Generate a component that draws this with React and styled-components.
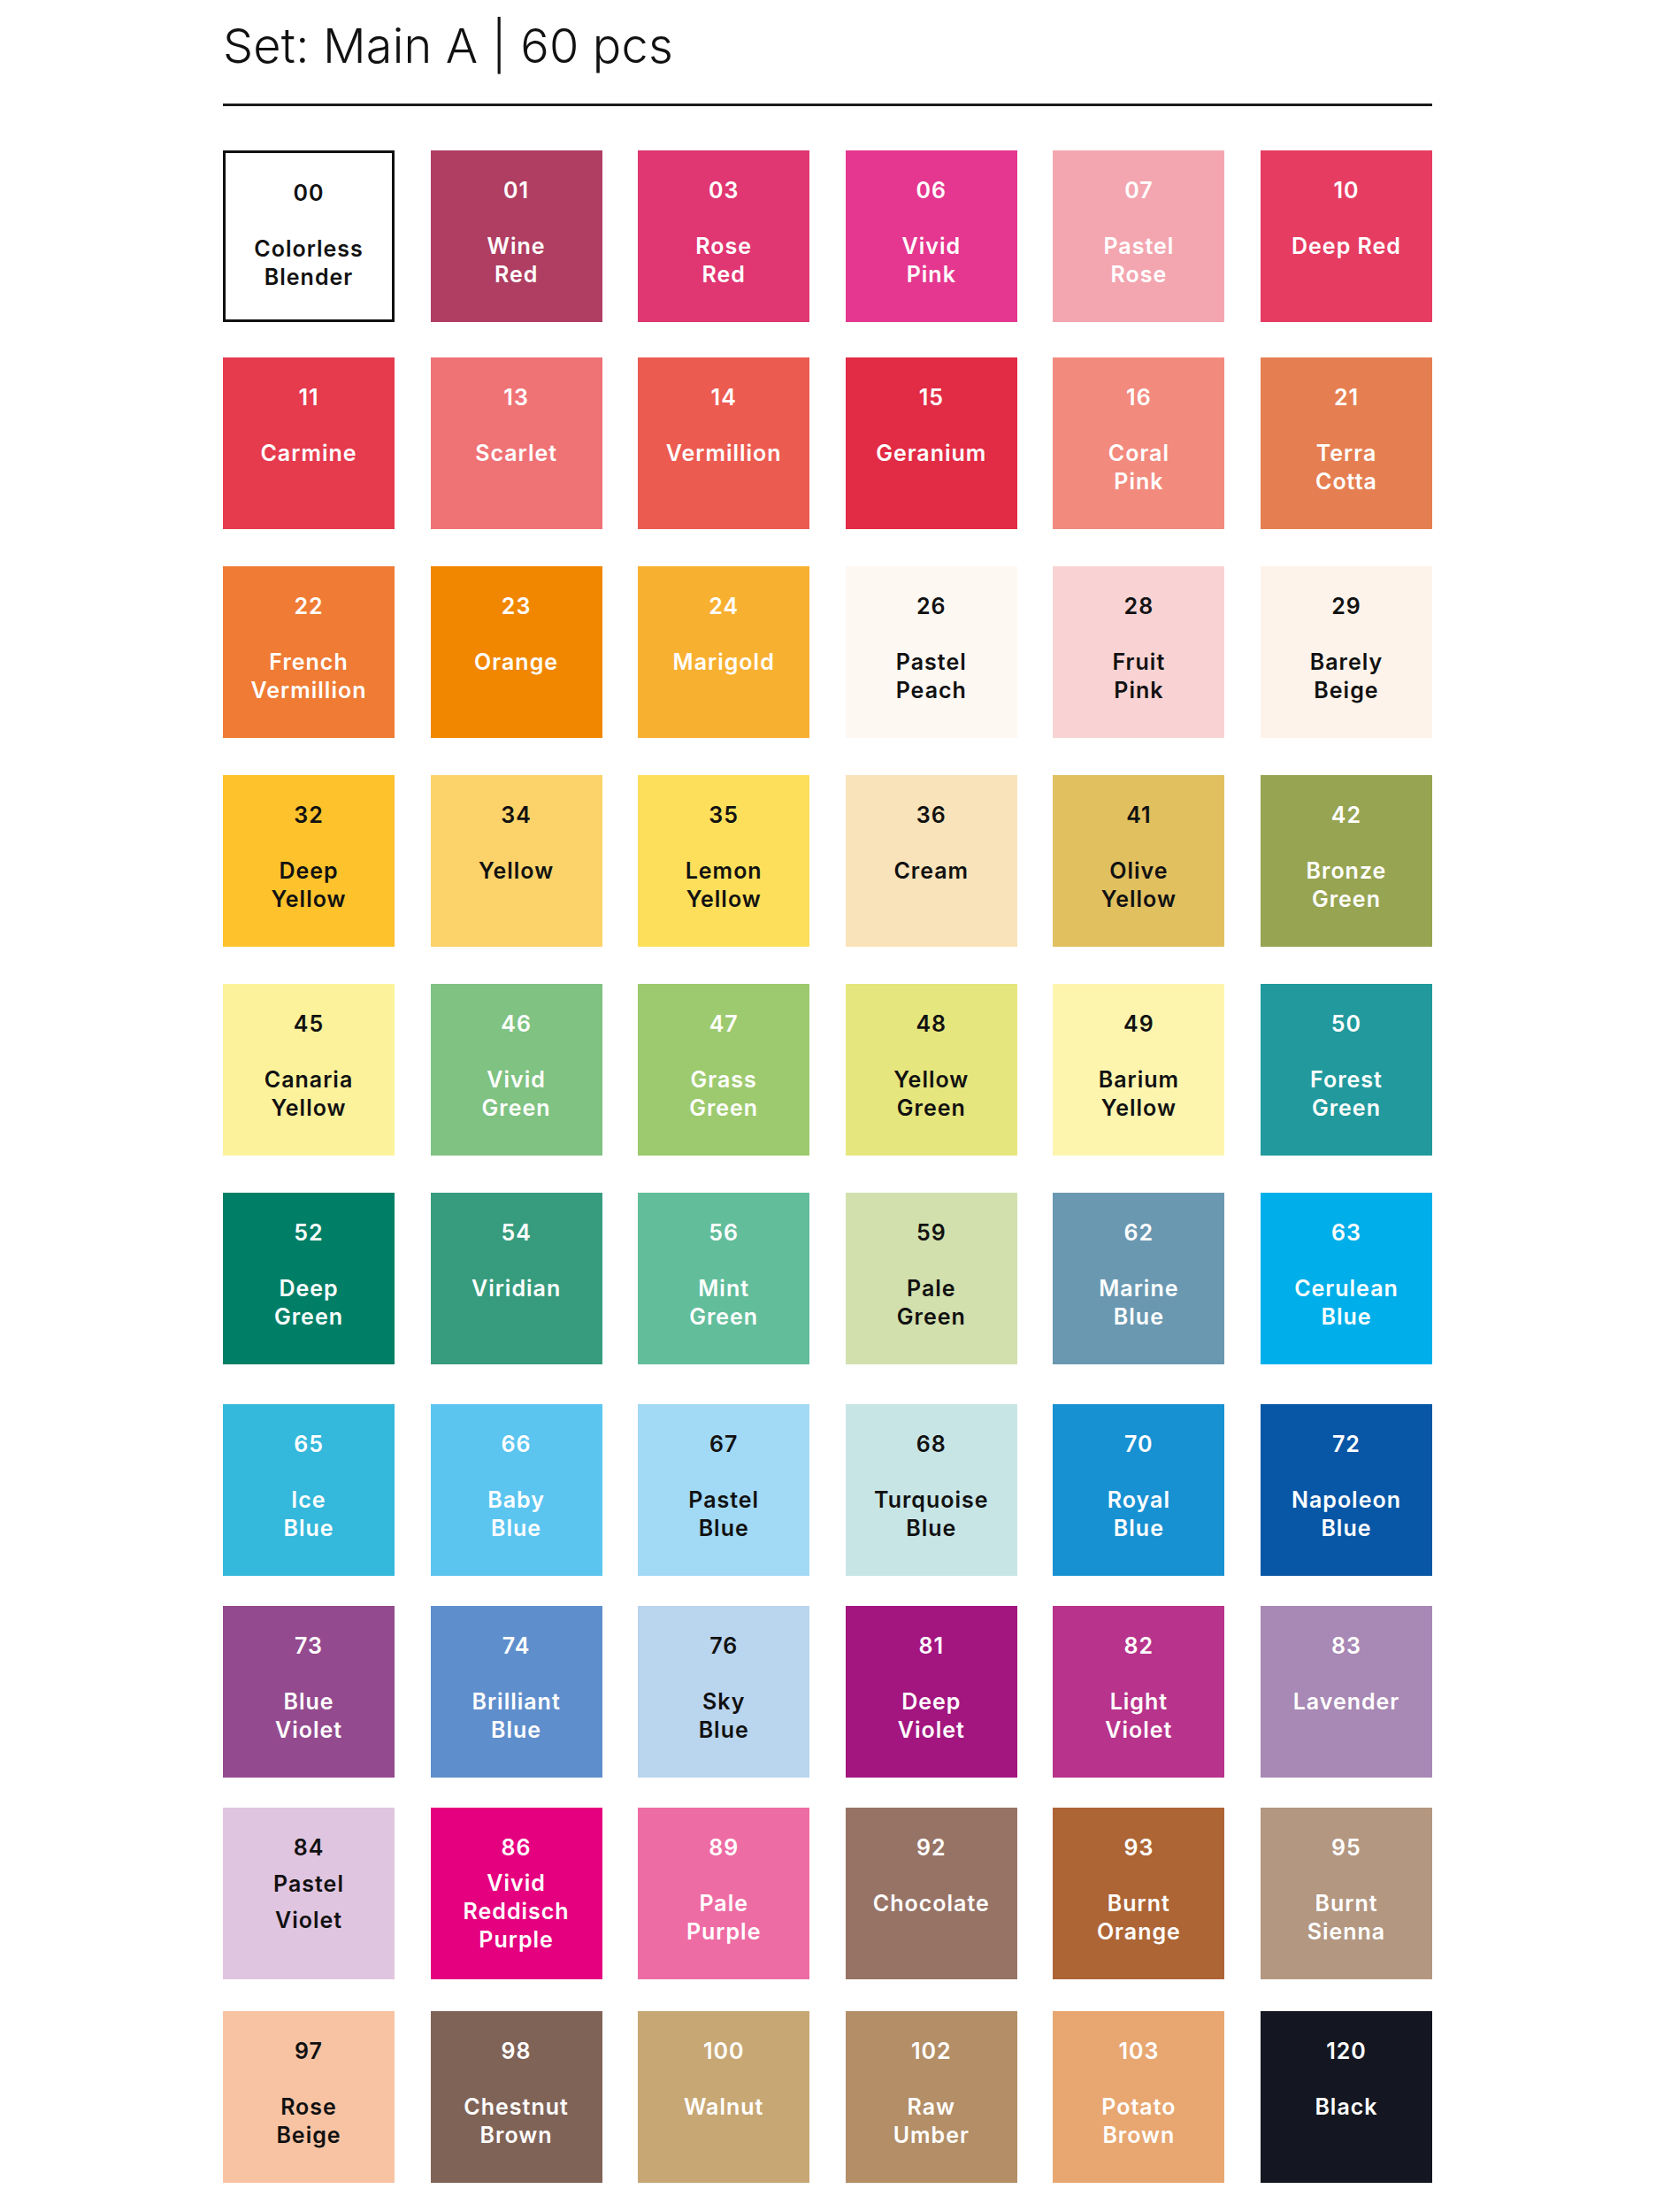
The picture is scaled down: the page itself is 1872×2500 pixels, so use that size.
import React from 'react';
import styled, { createGlobalStyle } from 'styled-components';

const GlobalStyle = createGlobalStyle`
   body {
      margin: 0;
      background: #fff;
      font-family: Inter, 'Noto Sans', 'Liberation Sans', sans-serif;
   }
`;

const Page = styled.div`
   width: 1367px;
   padding: 25px 0 40px 252px;
`;

const Title = styled.h1`
   margin: 0;
   font-size: 54px;
   line-height: 54px;
   font-weight: 300;
   color: #111;
   letter-spacing: 0.2px;
`;

const Rule = styled.hr`
   margin: 38px 0 0;
   border: 0;
   height: 3px;
   background: #1a1a1a;
`;

const Grid = styled.div`
   margin-top: 50px;
   display: flex;
   flex-direction: column;
`;

const Row = styled.div`
   display: grid;
   grid-template-columns: repeat(6, 194px);
   justify-content: space-between;
   margin-top: ${p => p.$gap}px;
   &:first-child {
      margin-top: 0;
   }
`;

const Swatch = styled.div`
   box-sizing: border-box;
   height: 194px;
   padding-top: 29px;
   display: flex;
   flex-direction: column;
   align-items: center;
   text-align: center;
   font-size: 25px;
   font-weight: 600;
   letter-spacing: 1px;
   background: ${p => p.$bg};
   color: ${p => (p.$dark ? '#111' : '#fff')};
   border: ${p => (p.$outline ? '3px solid #111' : '0')};
`;

const Code = styled.div`
   line-height: 32px;
`;

const Name = styled.div`
   margin-top: ${p => p.$mt ?? 31}px;
   line-height: ${p => p.$lh || 32}px;
   white-space: pre-line;
`;

const rows = [
   { gap: 0, items: [
      ['00', 'Colorless\nBlender', '#ffffff', true, { outline: true }],
      ['01', 'Wine\nRed', '#b03e62'],
      ['03', 'Rose\nRed', '#e03672'],
      ['06', 'Vivid\nPink', '#e5378f'],
      ['07', 'Pastel\nRose', '#f3a6b0'],
      ['10', 'Deep Red', '#e63c62'],
   ] },
   { gap: 40, items: [
      ['11', 'Carmine', '#e63a4d'],
      ['13', 'Scarlet', '#ef7275'],
      ['14', 'Vermillion', '#ec5b50'],
      ['15', 'Geranium', '#e22b44'],
      ['16', 'Coral\nPink', '#f28a7e'],
      ['21', 'Terra\nCotta', '#e57f51'],
   ] },
   { gap: 42, items: [
      ['22', 'French\nVermillion', '#ef7b34'],
      ['23', 'Orange', '#f18700'],
      ['24', 'Marigold', '#f8b031'],
      ['26', 'Pastel\nPeach', '#fef8f3', true],
      ['28', 'Fruit\nPink', '#f9d3d3', true],
      ['29', 'Barely\nBeige', '#fdf3ea', true],
   ] },
   { gap: 42, items: [
      ['32', 'Deep\nYellow', '#fec22c', true],
      ['34', 'Yellow', '#fbd36a', true],
      ['35', 'Lemon\nYellow', '#fedf5b', true],
      ['36', 'Cream', '#f9e3ba', true],
      ['41', 'Olive\nYellow', '#e1c060', true],
      ['42', 'Bronze\nGreen', '#97a452'],
   ] },
   { gap: 42, items: [
      ['45', 'Canaria\nYellow', '#fcf29b', true],
      ['46', 'Vivid\nGreen', '#7fc282'],
      ['47', 'Grass\nGreen', '#9dca6e'],
      ['48', 'Yellow\nGreen', '#e6e67e', true],
      ['49', 'Barium\nYellow', '#fdf5ae', true],
      ['50', 'Forest\nGreen', '#229a9d'],
   ] },
   { gap: 42, items: [
      ['52', 'Deep\nGreen', '#007f66'],
      ['54', 'Viridian', '#379c7d'],
      ['56', 'Mint\nGreen', '#62bd9b'],
      ['59', 'Pale\nGreen', '#d2e0ad', true],
      ['62', 'Marine\nBlue', '#6a98b1'],
      ['63', 'Cerulean\nBlue', '#00afea'],
   ] },
   { gap: 45, items: [
      ['65', 'Ice\nBlue', '#34b8dc'],
      ['66', 'Baby\nBlue', '#5bc5f0'],
      ['67', 'Pastel\nBlue', '#a2d9f5', true],
      ['68', 'Turquoise\nBlue', '#c8e5e6', true],
      ['70', 'Royal\nBlue', '#1891d2'],
      ['72', 'Napoleon\nBlue', '#0757a6'],
   ] },
   { gap: 34, items: [
      ['73', 'Blue\nViolet', '#944a8e'],
      ['74', 'Brilliant\nBlue', '#5f8ecc'],
      ['76', 'Sky\nBlue', '#bad5ee', true],
      ['81', 'Deep\nViolet', '#a3157f'],
      ['82', 'Light\nViolet', '#b8338b'],
      ['83', 'Lavender', '#a888b4'],
   ] },
   { gap: 34, items: [
      ['84', 'Pastel\nViolet', '#e0c5e0', true, { mt: 5, lh: 41 }],
      ['86', 'Vivid\nReddisch\nPurple', '#e5007f', false, { mt: 8 }],
      ['89', 'Pale\nPurple', '#ee6ca4'],
      ['92', 'Chocolate', '#977366'],
      ['93', 'Burnt\nOrange', '#ad6535'],
      ['95', 'Burnt\nSienna', '#b39781'],
   ] },
   { gap: 36, items: [
      ['97', 'Rose\nBeige', '#f8c3a3', true],
      ['98', 'Chestnut\nBrown', '#806357'],
      ['100', 'Walnut', '#c7a774'],
      ['102', 'Raw\nUmber', '#b38e66'],
      ['103', 'Potato\nBrown', '#e8a771'],
      ['120', 'Black', '#141722'],
   ] },
];

const App = () => (
   <>
      <GlobalStyle />
      <Page>
         <Title>Set: Main A | 60 pcs</Title>
         <Rule />
         <Grid>
            {rows.map((row, i) => (
               <Row key={i} $gap={row.gap}>
                  {row.items.map(([code, name, bg, dark, opts = {}]) => (
                     <Swatch key={code} $bg={bg} $dark={dark} $outline={opts.outline}>
                        <Code>{code}</Code>
                        <Name $mt={opts.mt} $lh={opts.lh}>{name}</Name>
                     </Swatch>
                  ))}
               </Row>
            ))}
         </Grid>
      </Page>
   </>
);

export default App;
